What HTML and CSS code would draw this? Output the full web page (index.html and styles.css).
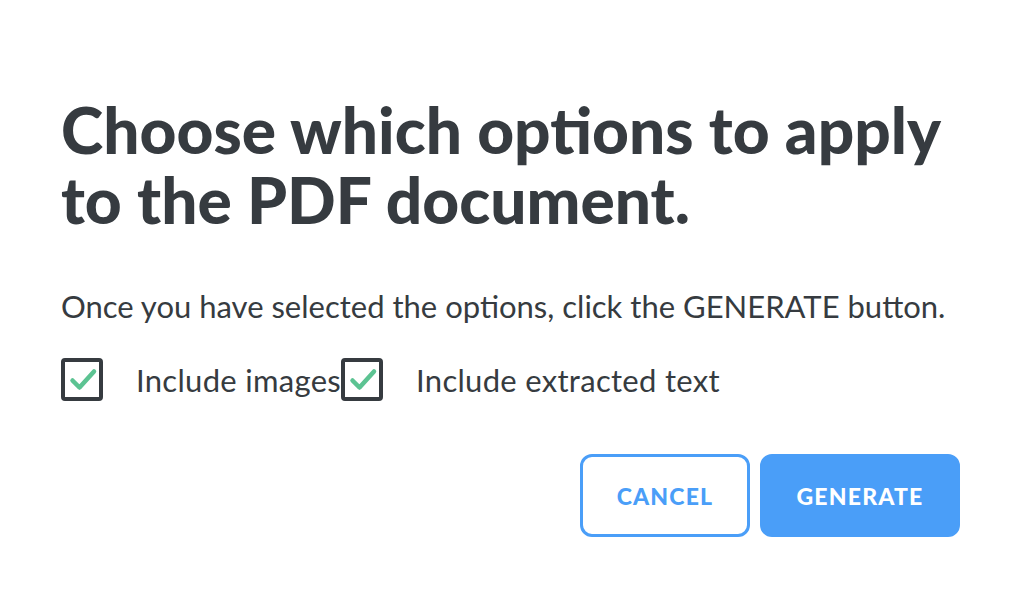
FILE: index.html
```html
<!DOCTYPE html>
<html lang="en">
<head>
<meta charset="utf-8">
<title>PDF options</title>
<link rel="stylesheet" href="styles.css">
</head>
<body>
<main class="dialog">
  <h1 class="title">Choose which options to apply to the PDF document.</h1>
  <p class="hint">Once you have selected the options, click the GENERATE button.</p>
  <div class="options">
    <label class="option">
      <span class="box"><svg viewBox="0 0 34 35" width="34" height="35"><path d="M7.5 18.5 L14.5 25.5 L29 9.5" fill="none" stroke="#5cc392" stroke-width="4.5" stroke-linecap="round" stroke-linejoin="round"/></svg></span>
      <span class="label">Include images</span>
    </label>
    <label class="option">
      <span class="box"><svg viewBox="0 0 34 35" width="34" height="35"><path d="M7.5 18.5 L14.5 25.5 L29 9.5" fill="none" stroke="#5cc392" stroke-width="4.5" stroke-linecap="round" stroke-linejoin="round"/></svg></span>
      <span class="label">Include extracted text</span>
    </label>
  </div>
  <div class="actions">
    <button class="btn btn-outline">CANCEL</button>
    <button class="btn btn-solid">GENERATE</button>
  </div>
</main>
</body>
</html>
```

FILE: styles.css
```css
html, body {
  margin: 0;
  padding: 0;
  background: #ffffff;
}
body {
  font-family: "Lato", "Noto Sans", sans-serif;
  color: #363b40;
}
.dialog {
  width: 1020px;
  height: 600px;
  box-sizing: border-box;
  padding: 95px 60px 0 61px;
  display: flex;
  flex-direction: column;
}
.title {
  margin: 0;
  font-size: 64px;
  line-height: 70px;
  font-weight: 900;
  letter-spacing: 0;
  max-width: 890px;
}
.hint {
  margin: 52px 0 0 0;
  font-size: 31px;
  line-height: 38px;
  font-weight: 400;
}
.options {
  display: flex;
  margin-top: 33px;
}
.option {
  display: flex;
  align-items: center;
}
.box {
  width: 42px;
  height: 43px;
  box-sizing: border-box;
  border: 4px solid #363b40;
  border-radius: 4px;
  display: flex;
}
.box svg {
  width: 34px;
  height: 35px;
  display: block;
}
.label {
  margin-left: 33px;
  font-size: 31px;
  line-height: 38px;
  letter-spacing: 0.3px;
}
.actions {
  display: flex;
  justify-content: flex-end;
  gap: 10px;
  margin-top: 53px;
}
.btn {
  height: 83px;
  box-sizing: border-box;
  border-radius: 12px;
  font-family: "Lato", "Noto Sans", sans-serif;
  font-weight: 900;
  font-size: 23px;
  letter-spacing: 1.2px;
  cursor: pointer;
}
.btn-outline {
  width: 170px;
  background: #ffffff;
  border: 3px solid #4a9ef8;
  color: #4a9ef8;
}
.btn-solid {
  width: 200px;
  background: #4a9ef8;
  border: 3px solid #4a9ef8;
  color: #ffffff;
}
```
